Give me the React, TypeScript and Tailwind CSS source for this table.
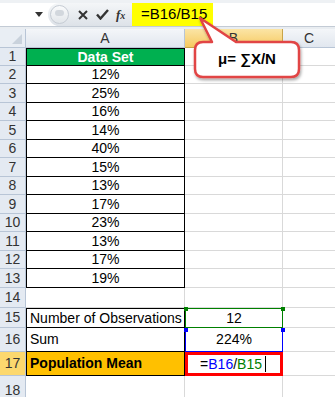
import React from "react";

const values = ["12%", "25%", "16%", "14%", "40%", "15%", "13%", "17%", "23%", "13%", "17%", "19%"];
const dataHeights = [18, 18, 19, 18, 19, 18, 19, 18, 19, 18, 19, 18, 19];

function RowHead({ n, active = false }: { n: number; active?: boolean }) {
    return (
        <div
            className={
                "flex items-center justify-center border-r border-b border-[#b8c5d6] text-[14px] text-[#333] " +
                (active ? "bg-[#fcd86e]" : "bg-[#e4eaf2]")
            }
        >
            {n}
        </div>
    );
}

function Gray({ cls = "" }: { cls?: string }) {
    return <div className={"border-r border-b border-[#d9d9d9] " + cls} />;
}

export default function App() {
    return (
        <div className="relative h-[397px] w-[335px] overflow-hidden bg-white font-['Liberation_Sans',Arial,sans-serif] text-black">
            {/* formula bar */}
            <div className="flex h-[27px] border-t-[3px] border-b border-t-[#eef1f4] border-b-[#c3cbd5]">
                <div className="flex w-[48px] items-center justify-end pr-[5px]">
                    <svg width="8" height="5" viewBox="0 0 8 5">
                        <path d="M0 0h8L4 5z" fill="#333" />
                    </svg>
                </div>
                <div className="flex w-[84px] items-center rounded-l-full bg-gradient-to-b from-[#f4f6f8] to-[#dde2e8]">
                    <div className="ml-[2px] h-[19px] w-[19px] rounded-full border border-[#c6ccd4] bg-gradient-to-b from-[#fafbfc] to-[#e2e6ea]">
                        <div className="mx-auto mt-[4px] h-[6px] w-[9px] rounded-full bg-[#d2d7dd]" />
                    </div>
                    <svg className="ml-[9px]" width="10" height="10" viewBox="0 0 10 10">
                        <path d="M1 1L9 9M9 1L1 9" stroke="#333" strokeWidth="2" />
                    </svg>
                    <svg className="ml-[8px]" width="13" height="11" viewBox="0 0 13 11">
                        <path d="M1 5.5L4.5 9.5L12 1" stroke="#333" strokeWidth="2.4" fill="none" />
                    </svg>
                    <span className="ml-[7px] font-['Liberation_Serif',serif] text-[13px] italic font-bold text-[#333]">
                        f<span className="text-[10px]">x</span>
                    </span>
                </div>
                <div className="flex w-[81px] items-center bg-[#ffff00] pl-[9px] text-[15px] text-black">=B16/B15</div>
                <div className="flex-1 bg-white" />
            </div>
            <div className="h-[2px] bg-[#e9edf1]" />

            {/* grid */}
            <div
                className="grid grid-cols-[26px_159px_98px_52px]"
                style={{ gridTemplateRows: ["19px", ...dataHeights.map((h) => h + "px"), "20px", "20px", "24px", "24px", "30px"].join(" ") }}
            >
                {/* header */}
                <div className="relative border-r border-b border-[#b8c5d6] bg-[#e9eef4]">
                    <svg className="absolute right-[3px] bottom-[3px]" width="10" height="10" viewBox="0 0 10 10">
                        <path d="M10 0V10H0z" fill="#c9d2dc" />
                    </svg>
                </div>
                <div className="flex items-center justify-center border-r border-b border-[#b8c5d6] bg-gradient-to-b from-[#f4f6f9] to-[#e1e7ef] text-[14px] text-[#333]">A</div>
                <div className="flex items-center justify-center border-r border-b border-[#c9a448] bg-gradient-to-b from-[#fbe5a5] to-[#f6ca5e] text-[14px] text-[#333]">B</div>
                <div className="flex items-center justify-center border-b border-[#b8c5d6] bg-gradient-to-b from-[#f4f6f9] to-[#e1e7ef] text-[14px] text-[#333]">C</div>

                {/* row 1 */}
                <RowHead n={1} />
                <div className="flex items-center justify-center border border-black bg-[#00b050] text-[14px] font-bold text-white">Data Set</div>
                <Gray />
                <Gray cls="border-r-0" />

                {values.map((v, i) => (
                    <React.Fragment key={i}>
                        <RowHead n={i + 2} />
                        <div className="flex items-center justify-center border-x border-b border-black text-[14px]">{v}</div>
                        <Gray />
                        <Gray cls="border-r-0" />
                    </React.Fragment>
                ))}

                {/* row 14 */}
                <RowHead n={14} />
                <Gray />
                <Gray />
                <Gray cls="border-r-0" />

                {/* row 15 */}
                <RowHead n={15} />
                <div className="flex items-center border border-black pl-[3px] text-[14px] whitespace-nowrap">Number of Observations</div>
                <div className="flex items-center justify-center border border-[#008000] text-[14px]">12</div>
                <Gray cls="border-r-0" />

                {/* row 16 */}
                <RowHead n={16} />
                <div className="flex items-center border-x border-b border-black pl-[3px] text-[14px]">Sum</div>
                <div className="flex items-center justify-center border-x border-b border-[#0000ff] text-[14px]">224%</div>
                <Gray cls="border-r-0" />

                {/* row 17 */}
                <RowHead n={17} active />
                <div className="flex items-center border-x border-b border-black bg-[#ffc000] pl-[3px] text-[14px] font-bold">Population Mean</div>
                <div className="flex items-center justify-end border-[3px] border-[#ff0000] pr-[14px] text-[14px]">
                    <span>=</span>
                    <span className="text-[#0000ff]">B16</span>
                    <span>/</span>
                    <span className="text-[#008000]">B15</span>
                    <span className="ml-[3px] h-[16px] w-px bg-black" />
                </div>
                <Gray cls="border-r-0" />

                {/* row 18 */}
                <RowHead n={18} />
                <Gray />
                <Gray />
                <Gray cls="border-r-0" />
            </div>

            {/* range handles */}
            <div className="absolute left-[184px] top-[307px] h-[4px] w-[4px] bg-[#008000]" />
            <div className="absolute left-[281px] top-[307px] h-[4px] w-[4px] bg-[#008000]" />
            <div className="absolute left-[184px] top-[328px] h-[4px] w-[4px] bg-[#0000ff]" />
            <div className="absolute left-[281px] top-[328px] h-[4px] w-[4px] bg-[#0000ff]" />

            {/* callout */}
            <svg className="absolute left-0 top-0" width="335" height="397" viewBox="0 0 335 397">
                <defs>
                    <filter id="sh" x="-20%" y="-20%" width="140%" height="160%">
                        <feDropShadow dx="1" dy="2" stdDeviation="1.5" floodColor="#000" floodOpacity="0.35" />
                    </filter>
                </defs>
                <path
                    d="M212 42 L200 18 L236 42 H291 Q299 42 299 50 V69 Q299 77 291 77 H203 Q195 77 195 69 V50 Q195 42 203 42 Z"
                    fill="#fff"
                    stroke="#e14444"
                    strokeWidth="2.5"
                    strokeLinejoin="round"
                    filter="url(#sh)"
                />
            </svg>
            <div className="absolute left-[195px] top-[42px] flex h-[35px] w-[104px] items-center justify-center text-[15px] font-bold">
                μ= ∑X/N
            </div>
        </div>
    );
}
